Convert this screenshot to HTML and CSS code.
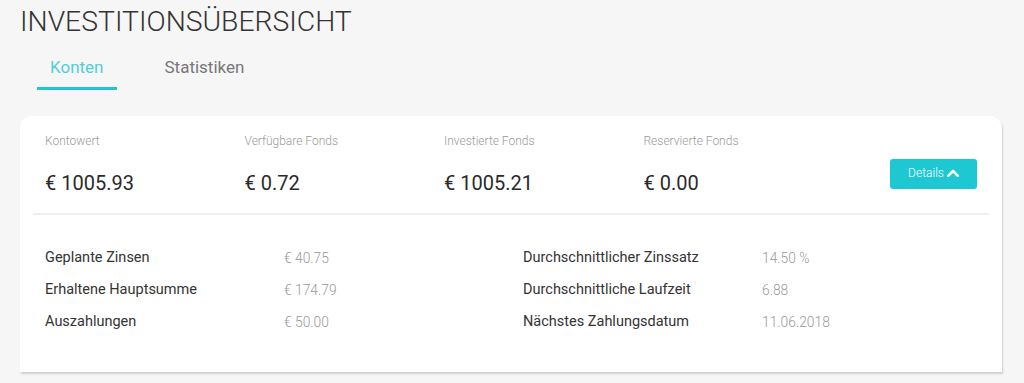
FILE: index.html
```
<!DOCTYPE html>
<html lang="de">
<head>
<meta charset="utf-8">
<title>Investitionsübersicht</title>
<link rel="stylesheet" href="styles.css">
</head>
<body>
<h1 class="title">INVESTITIONSÜBERSICHT</h1>
<nav class="tabs">
  <a class="tab active">Konten</a>
  <a class="tab">Statistiken</a>
</nav>
<section class="card">
  <div class="summary">
    <div class="stat">
      <div class="stat-label">Kontowert</div>
      <div class="stat-value">€ 1005.93</div>
    </div>
    <div class="stat">
      <div class="stat-label">Verfügbare Fonds</div>
      <div class="stat-value">€ 0.72</div>
    </div>
    <div class="stat">
      <div class="stat-label">Investierte Fonds</div>
      <div class="stat-value">€ 1005.21</div>
    </div>
    <div class="stat">
      <div class="stat-label">Reservierte Fonds</div>
      <div class="stat-value">€ 0.00</div>
    </div>
    <button class="details-btn">Details<svg class="chev" viewBox="0 0 12 8" width="12" height="8"><path d="M1.2 6.8 L6 2 L10.8 6.8" fill="none" stroke="#fff" stroke-width="2.6" stroke-linejoin="round" stroke-linecap="round"/></svg></button>
  </div>
  <div class="divider"></div>
  <div class="details">
    <div class="d-label">Geplante Zinsen</div><div class="d-value">€ 40.75</div>
    <div class="d-label">Durchschnittlicher Zinssatz</div><div class="d-value">14.50 %</div>
    <div class="d-label">Erhaltene Hauptsumme</div><div class="d-value">€ 174.79</div>
    <div class="d-label">Durchschnittliche Laufzeit</div><div class="d-value">6.88</div>
    <div class="d-label">Auszahlungen</div><div class="d-value">€ 50.00</div>
    <div class="d-label">Nächstes Zahlungsdatum</div><div class="d-value">11.06.2018</div>
  </div>
</section>
</body>
</html>
```
FILE: styles.css
```
* { box-sizing: border-box; }
html, body { margin: 0; padding: 0; }
body {
  background: #f6f6f6;
  font-family: Roboto, "Liberation Sans", Arial, sans-serif;
  color: #333;
  width: 1024px;
  height: 383px;
  overflow: hidden;
}
.title {
  margin: 4px 0 0 20px;
  font-size: 28.3px;
  line-height: 36px;
  font-weight: 300;
  color: #333;
  letter-spacing: 0;
}
.tabs {
  display: flex;
  margin: 17px 0 0 37px;
  gap: 35px;
}
.tab {
  font-size: 17px;
  line-height: 20px;
  padding: 0 13px 10px;
  color: #777;
  border-bottom: 3px solid transparent;
}
.tab.active {
  color: #4fcfd8;
  border-bottom-color: #22c6d1;
}
.card {
  margin: 26px 0 0 20px;
  width: 982px;
  background: #fff;
  border-radius: 12px 12px 0 0;
  box-shadow: 1px 2px 2px rgba(0,0,0,0.16);
  padding: 17px 0 34px;
}
.summary {
  display: flex;
  padding: 0 25px;
  align-items: flex-start;
}
.stat { width: 199.5px; }
.stat-label {
  font-size: 12px;
  line-height: 16px;
  font-weight: 300;
  color: #9a9a9a;
}
.stat-value {
  margin-top: 22px;
  font-size: 20px;
  line-height: 24px;
  color: #2a2a2a;
}
.details-btn {
  margin-left: auto;
  margin-top: 26px;
  width: 87px;
  height: 30px;
  border: 0;
  border-radius: 3px;
  background: #1ec8d3;
  color: #fff;
  font-family: Roboto, "Liberation Sans", Arial, sans-serif;
  font-size: 12px;
  font-weight: 300;
  display: flex;
  align-items: center;
  justify-content: center;
  gap: 3px;
  padding: 0 0 3px;
}
.chev { display: block; }
.divider {
  margin: 18px 13px 0;
  height: 2px;
  background: #efefef;
}
.details {
  margin-top: 27px;
  padding: 0 25px;
  display: grid;
  grid-template-columns: 239px 239px 239px 239px;
  grid-auto-rows: 32px;
  align-items: center;
}
.d-label {
  font-size: 14.5px;
  line-height: 32px;
  color: #333;
}
.d-value {
  font-size: 13.8px;
  line-height: 32px;
  font-weight: 300;
  color: #999;
}
```
